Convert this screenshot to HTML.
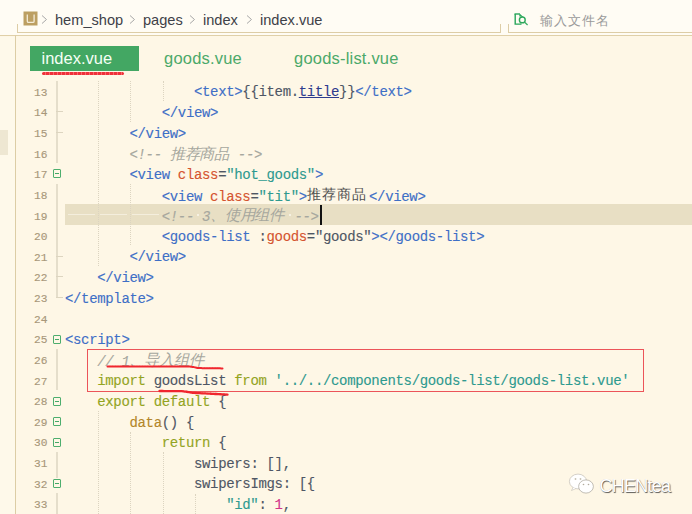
<!DOCTYPE html>
<html><head><meta charset="utf-8">
<style>
html,body{margin:0;padding:0;}
body{width:692px;height:514px;overflow:hidden;position:relative;background:#FEF7E6;font-family:"Liberation Sans",sans-serif;}
.abs{position:absolute;}
#top{position:absolute;left:0;top:0;width:692px;height:35px;background:#FFFCF4;}
#topline{position:absolute;left:0;top:35px;width:692px;height:1px;background:#E0D0A8;}
.brk{position:absolute;background:#DDCDA6;}
.crumb{position:absolute;top:10px;font-size:14.6px;color:#3E4148;line-height:20px;white-space:pre;}
.chev{position:absolute;top:13px;width:4px;height:4px;border-right:1px solid #B8B8B8;border-top:1px solid #B8B8B8;transform:rotate(45deg);}
#vline{position:absolute;left:15px;top:35px;width:1px;height:479px;background:#DCCDA5;}
#lpanel{position:absolute;left:0;top:37px;width:15px;height:477px;background:#FEF9EA;}
.tab{position:absolute;top:46px;font-size:16.5px;letter-spacing:0.2px;line-height:25px;color:#4CA96A;white-space:pre;}
#tab1{left:30px;width:109px;height:25px;background:#43A763;color:#F4FFF5;}
.ln{position:absolute;left:20px;width:27.4px;text-align:right;font-family:"Liberation Mono",monospace;font-size:11.2px;-webkit-text-stroke:0.15px currentColor;line-height:20.6px;height:20.6px;color:#A8977A;}
.code{position:absolute;font-family:"Liberation Mono",monospace;font-size:14px;letter-spacing:-0.34px;-webkit-text-stroke:0.12px currentColor;line-height:20.6px;height:20.6px;white-space:pre;color:#4E5664;}
.cj{display:inline-block;position:relative;top:-0.4px;font-family:"Liberation Sans",sans-serif;font-size:13.6px;letter-spacing:0.4px;-webkit-text-stroke:0;}
.c.cj{font-size:15.3px;letter-spacing:-0.2px;top:-0.8px;}
.p.cj{font-size:14.4px;letter-spacing:1px;top:-1.5px;color:#505050;}
.t{color:#3E6FC6;}
.a{color:#D5542F;}
.s{color:#2E9A8F;}
.c{color:#A6A79E;font-style:italic;}
.k{color:#93A41F;}
.f{color:#B3862A;}
.p{color:#4E5664;}
.n{color:#D2338A;}
.u{color:#2D3B8E;text-decoration:underline;}
.dot{position:relative;}
.dot::after{content:"";position:absolute;left:3px;top:4.5px;width:2px;height:2px;background:#F6F1E2;}
#cur{position:absolute;left:65px;top:204px;width:627px;height:20.8px;background:#E8DFC4;}
.guide{position:absolute;width:0;border-left:1px dotted #DCD4C0;}
.fold{position:absolute;left:56px;width:2px;background:#E5DECB;}
.tick{position:absolute;left:56px;width:7px;height:1px;background:#DDD5C0;}
.fbox{position:absolute;left:53px;width:6px;height:7px;border:1.3px solid #4DAE6E;border-radius:1px;}
.fbox::after{content:"";position:absolute;left:0.8px;top:2.9px;width:4.6px;height:1.4px;background:#45A868;}
.ws{position:absolute;height:1px;background:#F4EEDD;}
</style></head><body>
<div id="top"></div>
<div id="topline"></div>
<div id="lpanel"></div>
<div id="vline"></div>
<div class="abs" style="left:0;top:130px;width:8px;height:25px;background:#EEE7D2"></div>
<!-- breadcrumb brackets -->
<div class="brk" style="left:17px;top:24px;width:1px;height:9px"></div>
<div class="brk" style="left:17px;top:32px;width:484px;height:1px"></div>
<div class="brk" style="left:500px;top:24px;width:1px;height:9px"></div>
<div class="brk" style="left:508px;top:24px;width:1px;height:9px"></div>
<div class="brk" style="left:508px;top:32px;width:184px;height:1px"></div>
<!-- U icon -->
<svg class="abs" style="left:23px;top:11px" width="16" height="16" viewBox="0 0 16 16">
<rect x="0.5" y="0.5" width="14" height="14" fill="#BC9F62"/>
<path d="M4.3 3.6 V10.2 Q4.3 11.4 5.5 11.4 H9.9 Q11.1 11.4 11.1 10.2 V3.6" fill="none" stroke="#F4ECD8" stroke-width="1.3"/>
</svg>
<svg class="abs" style="left:41px;top:14px" width="7" height="11"><path d="M1 1.5 L5.5 5.5 L1 9.5" fill="none" stroke="#A8A8A8" stroke-width="1"/></svg>
<div class="crumb" style="left:55px">hem_shop</div>
<svg class="abs" style="left:129px;top:14px" width="7" height="11"><path d="M1 1.5 L5.5 5.5 L1 9.5" fill="none" stroke="#A8A8A8" stroke-width="1"/></svg>
<div class="crumb" style="left:143px">pages</div>
<svg class="abs" style="left:189px;top:14px" width="7" height="11"><path d="M1 1.5 L5.5 5.5 L1 9.5" fill="none" stroke="#A8A8A8" stroke-width="1"/></svg>
<div class="crumb" style="left:203px">index</div>
<svg class="abs" style="left:246px;top:14px" width="7" height="11"><path d="M1 1.5 L5.5 5.5 L1 9.5" fill="none" stroke="#A8A8A8" stroke-width="1"/></svg>
<div class="crumb" style="left:260px">index.vue</div>
<!-- search -->
<svg class="abs" style="left:505px;top:6px" width="30" height="24" viewBox="505 6 30 24">
<path d="M515.2 14 V24.1 H521.5" fill="none" stroke="#27A559" stroke-width="1.4"/>
<path d="M514.5 14 H519.8" fill="none" stroke="#27A559" stroke-width="1.4"/>
<path d="M519.3 13.3 L522.8 16.6 L519.3 16.6 Z" fill="#27A559"/>
<path d="M522.1 16 V17" fill="none" stroke="#27A559" stroke-width="1.2"/>
<circle cx="522.3" cy="19.9" r="2.9" fill="none" stroke="#2EA85C" stroke-width="1.4"/>
<path d="M524.4 22 L527.6 25" fill="none" stroke="#3DAE66" stroke-width="1.3"/>
</svg>
<div class="abs" style="left:540px;top:11.5px;font-size:12.6px;letter-spacing:0.9px;line-height:18px;color:#9A9A9A;">输入文件名</div>
<!-- tabs -->
<div class="tab" id="tab1"><span style="position:absolute;left:11.5px;top:0;letter-spacing:0">index.vue</span></div>
<div class="abs" style="left:42px;top:72.2px;width:82px;height:2.6px;background:repeating-linear-gradient(90deg,#F0303A 0 3px,#F56A6A 3px 4px);border-radius:1.5px"></div>
<div class="tab" style="left:164px">goods.vue</div>
<div class="tab" style="left:294px">goods-list.vue</div>
<!-- current line -->
<div id="cur"></div>
<!-- fold gutter -->
<div class="fold" style="top:81px;height:82px"></div>
<div class="tick" style="top:111px"></div>
<div class="tick" style="top:132px"></div>
<div class="fbox" style="top:169px"></div>
<div class="fold" style="top:184px;height:114px"></div>
<div class="tick" style="top:256px"></div>
<div class="tick" style="top:276px"></div>
<div class="tick" style="top:297px"></div>
<div class="fbox" style="top:335px"></div>
<div class="fold" style="top:349px;height:41px"></div>
<div class="fbox" style="top:397px"></div>
<div class="fbox" style="top:417px"></div>
<div class="fbox" style="top:438px"></div>
<div class="fold" style="top:452px;height:26px"></div>
<div class="fbox" style="top:479px"></div>
<div class="fold" style="top:493px;height:21px"></div>
<!-- guides -->
<div class="guide" style="left:98px;top:81px;height:185px"></div>
<div class="guide" style="left:130px;top:81px;height:41px"></div>
<div class="guide" style="left:163px;top:81px;height:20px"></div>
<div class="guide" style="left:130px;top:184px;height:61px"></div>
<div class="guide" style="left:98px;top:411px;height:103px"></div>
<div class="guide" style="left:130px;top:432px;height:82px"></div>
<div class="guide" style="left:163px;top:452px;height:62px"></div>
<div class="guide" style="left:195px;top:494px;height:20px"></div>
<!-- whitespace markers line 19 -->
<div class="ws" style="left:68px;top:214px;width:27px"></div>
<div class="ws" style="left:100px;top:214px;width:27px"></div>
<div class="ws" style="left:132px;top:214px;width:27px"></div>
<div class="ln" style="top:82.72px">13</div>
<div class="code" style="top:82.42px;left:193.96px"><span class="t">&lt;text&gt;</span><span class="p">{{item.</span><span class="u">title</span><span class="p">}}</span><span class="t">&lt;/text&gt;</span></div>
<div class="ln" style="top:103.35px">14</div>
<div class="code" style="top:103.05px;left:161.72px"><span class="t">&lt;/view&gt;</span></div>
<div class="ln" style="top:123.98px">15</div>
<div class="code" style="top:123.68px;left:129.48px"><span class="t">&lt;/view&gt;</span></div>
<div class="ln" style="top:144.61px">16</div>
<div class="code" style="top:144.31px;left:129.48px"><span class="c">&lt;!-- </span><span class="c cj" style="width:60.00px">推荐商品</span><span class="c"> --&gt;</span></div>
<div class="ln" style="top:165.24px">17</div>
<div class="code" style="top:164.94px;left:129.48px"><span class="t">&lt;view </span><span class="a">class</span><span class="p">=</span><span class="s">&quot;hot_goods&quot;</span><span class="t">&gt;</span></div>
<div class="ln" style="top:185.87px">18</div>
<div class="code" style="top:185.57px;left:161.72px"><span class="t">&lt;view </span><span class="a">class</span><span class="p">=</span><span class="s">&quot;tit&quot;</span><span class="t">&gt;</span><span class="p cj" style="width:62.20px">推荐商品</span><span class="t">&lt;/view&gt;</span></div>
<div class="ln" style="top:206.50px">19</div>
<div class="code" style="top:206.20px;left:161.72px"><span class="c">&lt;!--<span class="dot"> </span>3</span><span class="c cj" style="width:76.25px">、使用组件</span><span class="c"><span class="dot"> </span>--&gt;</span></div>
<div class="ln" style="top:227.13px">20</div>
<div class="code" style="top:226.83px;left:161.72px"><span class="t">&lt;goods-list </span><span class="p">:</span><span class="a">goods</span><span class="p">=&quot;goods&quot;</span><span class="t">&gt;&lt;/goods-list&gt;</span></div>
<div class="ln" style="top:247.76px">21</div>
<div class="code" style="top:247.46px;left:129.48px"><span class="t">&lt;/view&gt;</span></div>
<div class="ln" style="top:268.39px">22</div>
<div class="code" style="top:268.09px;left:97.24px"><span class="t">&lt;/view&gt;</span></div>
<div class="ln" style="top:289.02px">23</div>
<div class="code" style="top:288.72px;left:65.00px"><span class="t">&lt;/template&gt;</span></div>
<div class="ln" style="top:309.65px">24</div>
<div class="code" style="top:309.35px;left:65.00px"></div>
<div class="ln" style="top:330.28px">25</div>
<div class="code" style="top:329.98px;left:65.00px"><span class="t">&lt;script&gt;</span></div>
<div class="ln" style="top:350.91px">26</div>
<div class="code" style="top:350.61px;left:97.24px"><span class="c">// 1</span><span class="c cj" style="width:75.00px">、导入组件</span></div>
<div class="ln" style="top:371.54px">27</div>
<div class="code" style="top:371.24px;left:97.24px"><span class="k">import </span><span class="p">goodsList </span><span class="k">from </span><span class="s">&#x27;../../components/goods-list/goods-list.vue&#x27;</span></div>
<div class="ln" style="top:392.17px">28</div>
<div class="code" style="top:391.87px;left:97.24px"><span class="k">export default </span><span class="p">{</span></div>
<div class="ln" style="top:412.80px">29</div>
<div class="code" style="top:412.50px;left:129.48px"><span class="f">data</span><span class="p">() {</span></div>
<div class="ln" style="top:433.43px">30</div>
<div class="code" style="top:433.13px;left:161.72px"><span class="k">return </span><span class="p">{</span></div>
<div class="ln" style="top:454.06px">31</div>
<div class="code" style="top:453.76px;left:193.96px"><span class="p">swipers: [],</span></div>
<div class="ln" style="top:474.69px">32</div>
<div class="code" style="top:474.39px;left:193.96px"><span class="p">swipersImgs: [{</span></div>
<div class="ln" style="top:495.32px">33</div>
<div class="code" style="top:495.02px;left:226.20px"><span class="s">&quot;id&quot;</span><span class="p">: </span><span class="n">1</span><span class="p">,</span></div>
<div class="abs" style="left:319.5px;top:204.8px;width:2px;height:19.9px;background:#111"></div>
<!-- red annotations -->
<div class="abs" style="left:87px;top:349px;width:555px;height:41px;border:1px solid #EC5459"></div>
<svg class="abs" style="left:0;top:0" width="692" height="514">
<path d="M107.5 366.5 L190 366.6 C194 366.7 196 368 200 368.1 L222.5 368.4" stroke="#F0262E" stroke-width="2" fill="none" stroke-linecap="round" stroke-dasharray="2.2 0.5"/>
<path d="M159.5 391 L182 391.2 C186 391.5 190 392.6 196 393 L227.5 394.6" stroke="#F0262E" stroke-width="2.3" fill="none" stroke-linecap="round" stroke-dasharray="2.2 0.5"/>
</svg>
<!-- watermark -->
<div class="abs" style="left:599.5px;top:475.5px;font-size:18px;letter-spacing:-0.75px;line-height:20px;color:#FFFFFF;text-shadow:0.8px 0.8px 0.8px rgba(40,40,40,0.75),-0.3px -0.3px 0.5px rgba(120,120,120,0.4);">CHENtea</div>
<svg class="abs" style="left:568px;top:472px" width="28" height="24" viewBox="0 0 28 24">
<ellipse cx="10" cy="9.5" rx="8.6" ry="7.4" fill="#fff" stroke="#B8B4AA" stroke-width="0.6"/>
<path d="M5 15.5 L3.5 18.5 L8 16.5" fill="#fff" stroke="#B8B4AA" stroke-width="0.5"/>
<ellipse cx="18" cy="14.5" rx="7.4" ry="6.6" fill="#fff" stroke="#A8A49A" stroke-width="0.7"/>
<circle cx="7.5" cy="7" r="0.9" fill="#C8C2B4"/><circle cx="12.5" cy="7" r="0.9" fill="#C8C2B4"/>
<circle cx="15.5" cy="12.5" r="0.8" fill="#B0AA9C"/><circle cx="20.5" cy="12.5" r="0.8" fill="#B0AA9C"/>
</svg>
</body></html>
